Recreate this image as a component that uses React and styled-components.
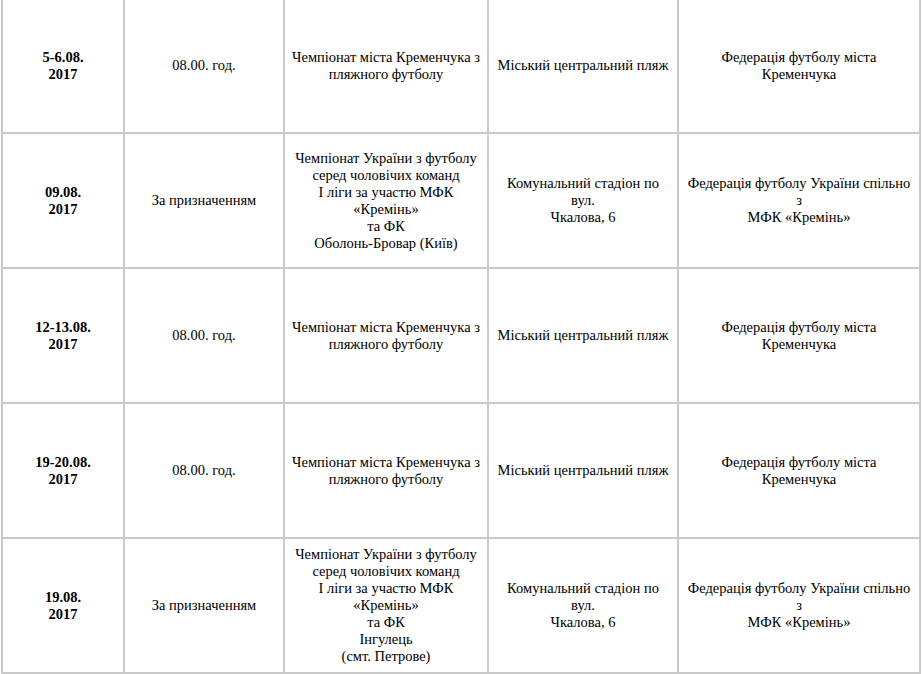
import React from 'react';
import styled, { createGlobalStyle } from 'styled-components';

const GlobalStyle = createGlobalStyle`
  html, body {
    margin: 0;
    padding: 0;
    background: #fff;
  }
  body {
    font-family: "Liberation Serif", "Times New Roman", serif;
    color: #000;
  }
`;

const Page = styled.div`
  padding-left: 1px;
  margin-top: -3px;
`;

const Table = styled.table`
  width: 918px;
  border-collapse: collapse;
  table-layout: fixed;
  font-size: 14.5px;
  line-height: 17px;
`;

const Col = styled.col`
  width: ${(p) => p.$w}px;
`;

const Cell = styled.td`
  height: 133px;
  border: 2px solid #c9c9c9;
  padding: 0 4px;
  text-align: center;
  vertical-align: middle;
  white-space: nowrap;
  font-weight: ${(p) => (p.$bold ? 'bold' : 'normal')};
`;

const widths = [122, 160, 204, 190, 242];

const beach = {
  time: ['08.00. год.'],
  event: ['Чемпіонат міста Кременчука з', 'пляжного футболу'],
  place: ['Міський центральний пляж'],
  org: ['Федерація футболу міста', 'Кременчука'],
};

const league = {
  time: ['За призначенням'],
  place: ['Комунальний стадіон по', 'вул.', 'Чкалова, 6'],
  org: ['Федерація футболу України спільно', 'з', 'МФК «Кремінь»'],
};

const rows = [
  { date: ['5-6.08.', '2017'], ...beach },
  {
    date: ['09.08.', '2017'],
    ...league,
    event: ['Чемпіонат України з футболу', 'серед чоловічих команд', 'І ліги за участю МФК', '«Кремінь»', 'та ФК', 'Оболонь-Бровар (Київ)'],
  },
  { date: ['12-13.08.', '2017'], ...beach },
  { date: ['19-20.08.', '2017'], ...beach },
  {
    date: ['19.08.', '2017'],
    ...league,
    event: ['Чемпіонат України з футболу', 'серед чоловічих команд', 'І ліги за участю МФК', '«Кремінь»', 'та ФК', 'Інгулець', '(смт. Петрове)'],
  },
];

const Lines = ({ items }) =>
  items.map((line, i) => (
    <React.Fragment key={i}>
      {i > 0 && <br />}
      {line}
    </React.Fragment>
  ));

export default function App() {
  return (
    <Page>
      <GlobalStyle />
      <Table>
        <colgroup>
          {widths.map((w, i) => (
            <Col key={i} $w={w} />
          ))}
        </colgroup>
        <tbody>
          {rows.map((r, i) => (
            <tr key={i}>
              <Cell $bold><Lines items={r.date} /></Cell>
              <Cell><Lines items={r.time} /></Cell>
              <Cell><Lines items={r.event} /></Cell>
              <Cell><Lines items={r.place} /></Cell>
              <Cell><Lines items={r.org} /></Cell>
            </tr>
          ))}
        </tbody>
      </Table>
    </Page>
  );
}
